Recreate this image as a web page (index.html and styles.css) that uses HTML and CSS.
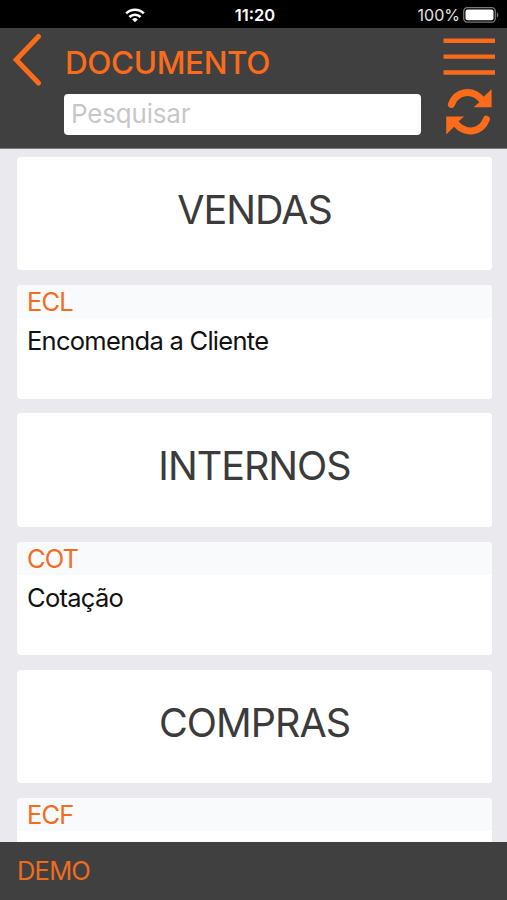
FILE: index.html
```html
<!DOCTYPE html>
<html lang="pt">
<head>
<meta charset="utf-8">
<meta name="viewport" content="width=device-width, initial-scale=1">
<title>Documento</title>
<link rel="stylesheet" href="styles.css">
</head>
<body>
<div class="app">
  <div class="status">
    <div class="status-left">
      <svg class="wifi" width="20" height="15" viewBox="0 0 20 15" fill="none" stroke="#fff" stroke-width="2.6">
        <path d="M1.2 5.4 A12.6 12.6 0 0 1 18.8 5.4"/>
        <path d="M4.4 9 A8 8 0 0 1 15.6 9"/>
        <path d="M10 14.2 L7.2 11.4 A4 4 0 0 1 12.8 11.4 Z" fill="#fff" stroke="none"/>
      </svg>
    </div>
    <span class="time">11:20</span>
    <div class="status-right">
      <span class="percent">100%</span>
      <svg width="36" height="16" viewBox="0 0 36 16">
        <rect x=".7" y=".7" width="31.6" height="14.4" rx="3.6" fill="none" stroke="#777" stroke-width="1.3"/>
        <rect x="2.5" y="2.5" width="28" height="10.8" rx="2" fill="#fff"/>
        <path d="M33.8 5.2 C35.8 6.2 35.8 9.6 33.8 10.6 Z" fill="#777"/>
      </svg>
    </div>
  </div>
  <header class="header">
    <button class="back" aria-label="Voltar">
      <svg width="30" height="54" viewBox="0 0 30 54" fill="none" stroke="#fb6b1a" stroke-width="5" stroke-linecap="round" stroke-linejoin="miter">
        <path d="M26.5 3.5 L4.2 26.8 L26.5 50"/>
      </svg>
    </button>
    <div class="center">
      <h1 class="title">DOCUMENTO</h1>
      <input class="search" type="text" placeholder="Pesquisar">
    </div>
    <div class="actions">
      <svg width="52" height="38" viewBox="0 0 52 38" fill="#fb6b1a">
        <path d="M.5 .4H52V4.9H.5ZM.5 16.5H52V20.8H.5ZM.5 32.2H52V36.7H.5Z"/>
      </svg>
      <svg class="refresh" width="46" height="46" viewBox="0 0 46 46">
        <path d="M5.4 15.4 C10.5 2.2 26 -.8 36 11" fill="none" stroke="#fb6b1a" stroke-width="7" stroke-linecap="round"/>
        <path d="M45.6 .2 V18.2 H27.6 L33.5 13 L38.4 7 Z" fill="#fb6b1a"/>
        <path d="M40.4 30.2 C35.3 43.4 19.8 46.4 9.8 34.6" fill="none" stroke="#fb6b1a" stroke-width="7" stroke-linecap="round"/>
        <path d="M.2 45.4 V27.4 H18.2 L12.3 32.6 L7.4 38.6 Z" fill="#fb6b1a"/>
      </svg>
    </div>
  </header>
  <main class="list">
    <section class="card group">VENDAS</section>
    <section class="card"><div class="code">ECL</div><div class="desc">Encomenda a Cliente</div></section>
    <section class="card group">INTERNOS</section>
    <section class="card"><div class="code">COT</div><div class="desc">Cotação</div></section>
    <section class="card group">COMPRAS</section>
    <section class="card"><div class="code">ECF</div></section>
  </main>
  <footer class="footer">DEMO</footer>
</div>
</body>
</html>
```
FILE: styles.css
```css
* { box-sizing: border-box; }
body { margin: 0; font-family: Inter, "Liberation Sans", sans-serif; }
.app { display: flex; flex-direction: column; width: 507px; height: 900px; overflow: hidden; background: #eaeaee; }
.status { flex: none; display: grid; grid-template-columns: 1fr auto 1fr; align-items: center; height: 28px; padding: 2px 8px 0 11px; background: #000; color: #fff; line-height: 20px; }
.status-left { display: flex; padding-left: 114px; }
.time { font-size: 16.5px; font-weight: 600; }
.status-right { display: flex; align-items: center; justify-content: flex-end; gap: 3px; }
.percent { font-size: 16px; color: #e4e4e4; }
.header { flex: none; display: flex; height: 121px; background: #404040; border-bottom: 1px solid #777; }
.back { flex: none; display: flex; align-items: flex-start; width: 64px; height: 66px; padding: 5px 0 0 12px; border: 0; background: none; }
.center { width: 357px; }
.title { margin: 15px 0 0 1px; font-size: 31.5px; line-height: 40px; font-weight: 500; letter-spacing: -.4px; color: #fb6b1a; white-space: nowrap; }
.search { display: block; width: 357px; height: 41px; margin-top: 11px; padding: 0 7px 3px; border: 0; border-radius: 4px; background: #fff; font: 400 26px Inter, sans-serif; letter-spacing: -.2px; }
.search::placeholder { color: #c7c7cb; opacity: 1; }
.actions { display: flex; flex-direction: column; align-items: flex-end; width: 74px; padding-top: 10px; }
.refresh { margin: 13px 3px 0 0; }
.list { flex: 1; min-height: 0; overflow: hidden; display: flex; flex-direction: column; gap: 14.9px; padding: 8.1px 15px 0 17px; }
.card { flex: none; height: 113.3px; overflow: hidden; border-radius: 4px; background: #fff; }
.group { padding-top: 27.9px; font-size: 39.5px; line-height: 50px; letter-spacing: -1px; text-align: center; color: #3b3b3b; }
.code { height: 33px; padding-left: 10px; background: #f9fafc; color: #f26c22; font-size: 25.5px; line-height: 34px; letter-spacing: -.9px; }
.desc { padding: 6px 0 0 10px; color: #111; font-size: 25.5px; line-height: 34px; letter-spacing: -.72px; }
.footer { flex: none; height: 58px; padding-left: 17px; background: #404040; color: #ef6c1f; font-size: 25.5px; line-height: 58px; letter-spacing: -.8px; }
```
